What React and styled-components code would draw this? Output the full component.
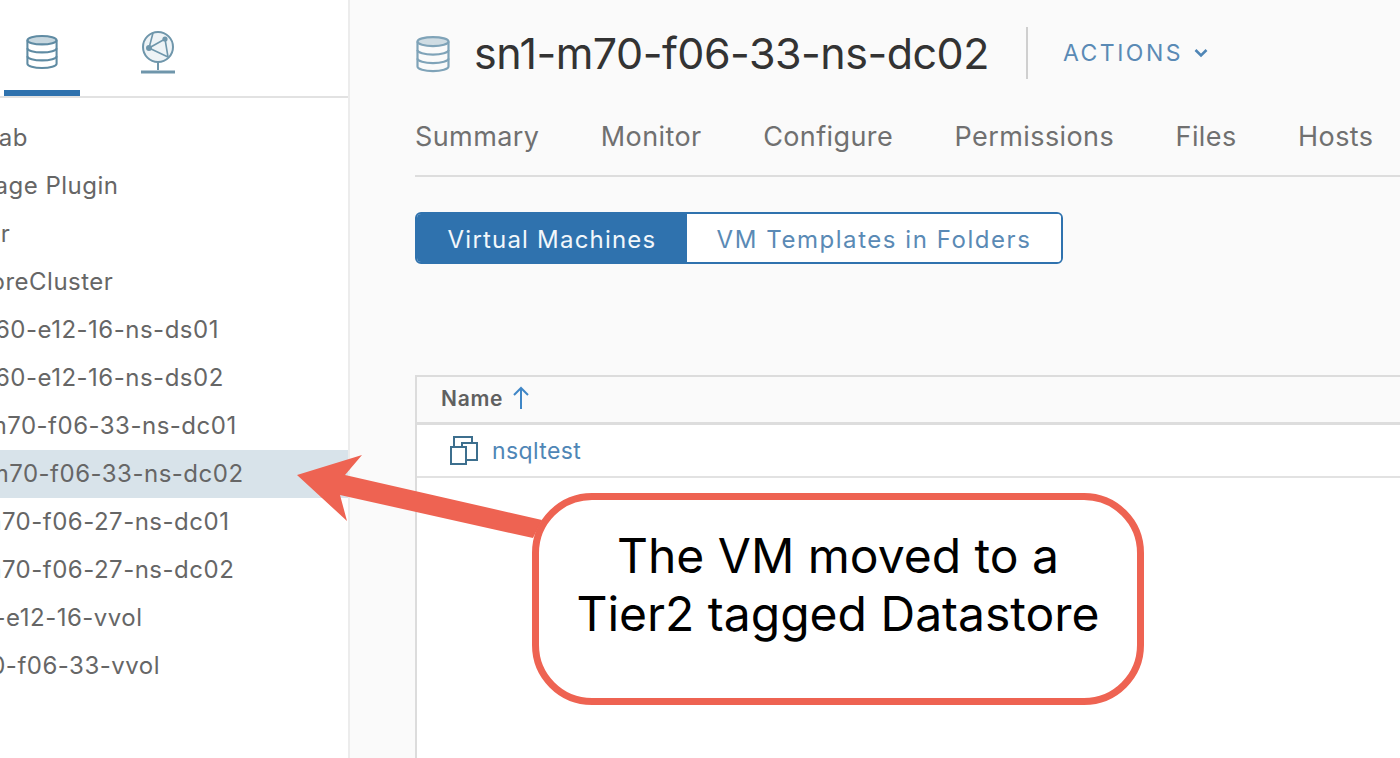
import React from 'react';
import styled, { createGlobalStyle } from 'styled-components';

const GlobalStyle = createGlobalStyle`
  html, body {
    margin: 0;
    height: 100%;
    overflow: hidden;
    background: #fafafa;
    font-family: Inter, "Noto Sans", sans-serif;
  }
`;

const Page = styled.div`
  position: relative;
  display: flex;
  width: 1400px;
  height: 758px;
  overflow: hidden;
`;

const Sidebar = styled.aside`
  flex: none;
  box-sizing: border-box;
  width: 350px;
  background: #ffffff;
  border-right: 2px solid #ececec;
  overflow: hidden;
`;

const IconTabs = styled.div`
  display: flex;
  height: 96px;
  padding-left: 4px;
  gap: 40px;
  border-bottom: 2px solid #e2e2e2;
`;

const IconTab = styled.div`
  box-sizing: border-box;
  width: 76px;
  height: 96px;
  padding-top: ${p => (p.$active ? 34 : 31)}px;
  display: flex;
  justify-content: center;
  border-bottom: 6px solid ${p => (p.$active ? '#2f72ae' : 'transparent')};
`;

const Tree = styled.div`
  padding-top: 16px;
`;

const TreeRow = styled.div`
  height: 48px;
  line-height: 48px;
  font-size: 24px;
  letter-spacing: 0.5px;
  color: #666666;
  white-space: nowrap;
  background: ${p => (p.$selected ? '#d8e3ea' : 'transparent')};
`;

const TreeLabel = styled.span`
  display: inline-block;
  margin-left: ${p => p.$offset}px;
`;

const Main = styled.main`
  flex: 1;
  min-width: 0;
  padding-left: 65px;
  display: flex;
  flex-direction: column;
`;

const TitleBar = styled.div`
  display: flex;
  align-items: center;
  height: 106px;
`;

const TitleIcon = styled.span`
  display: flex;
  margin: 3px 0 0 1px;
`;

const Title = styled.h1`
  margin: 0 0 0 24px;
  font-size: 43px;
  font-weight: 400;
  letter-spacing: -0.5px;
  color: #333333;
  white-space: nowrap;
`;

const Divider = styled.div`
  width: 2px;
  height: 52px;
  margin-left: 37px;
  background: #cfcfcf;
`;

const Actions = styled.div`
  display: flex;
  align-items: center;
  gap: 11px;
  margin-left: 35px;
  font-size: 23px;
  letter-spacing: 2.5px;
  color: #5a8ab5;
`;

const Tabs = styled.nav`
  display: flex;
  gap: 61.5px;
  height: 69px;
  line-height: 62px;
  border-bottom: 2px solid #dddddd;
  font-size: 27px;
  letter-spacing: 0.4px;
  color: #707070;
`;

const Segmented = styled.div`
  display: flex;
  align-self: flex-start;
  box-sizing: border-box;
  height: 52px;
  margin-top: 35px;
  border: 2px solid #2f72ae;
  border-radius: 6px;
  overflow: hidden;
  font-size: 24px;
  line-height: 51px;
`;

const Segment = styled.div`
  box-sizing: border-box;
  width: ${p => p.$width}px;
  text-align: center;
  letter-spacing: ${p => (p.$active ? 1.2 : 1.55)}px;
  background: ${p => (p.$active ? '#2f72ae' : '#ffffff')};
  color: ${p => (p.$active ? '#f2f7fb' : '#5a8ab5')};
`;

const Table = styled.section`
  flex: 1;
  margin-top: 111px;
  background: #ffffff;
  border-left: 2px solid #dcdcdc;
  border-top: 2px solid #dcdcdc;
`;

const HeaderRow = styled.div`
  display: flex;
  align-items: center;
  gap: 9px;
  box-sizing: border-box;
  height: 48px;
  padding: 0 0 3px 24px;
  background: #fafafa;
  border-bottom: 3px solid #dddddd;
  font-size: 21px;
  font-weight: 600;
  letter-spacing: 0.7px;
  color: #606060;
`;

const DataRow = styled.div`
  display: flex;
  align-items: center;
  gap: 14px;
  box-sizing: border-box;
  height: 53px;
  padding-left: 33px;
  border-bottom: 2px solid #e2e2e2;
  font-size: 23px;
  letter-spacing: 0.4px;
  color: #4f86b6;
`;

const Arrow = styled.svg`
  position: absolute;
  left: 0;
  top: 0;
  pointer-events: none;
`;

const Callout = styled.div`
  position: absolute;
  left: 532px;
  top: 493px;
  box-sizing: border-box;
  width: 612px;
  height: 212px;
  padding-bottom: 28px;
  display: flex;
  align-items: center;
  justify-content: center;
  text-align: center;
  background: #ffffff;
  border: 7px solid #ee6352;
  border-radius: 60px;
  font-size: 48px;
  line-height: 58px;
  color: #000000;
`;

const DatastoreIcon = ({ size, color }) => (
  <svg width={size} height={size * 1.12} viewBox="0 0 34 38" fill="none" stroke={color} strokeWidth="2.2">
    <ellipse cx="17" cy="6.5" rx="15.5" ry="4.5" fill={color} fillOpacity="0.35" />
    <path d="M1.5 6.5v25c0 2.5 7 4.5 15.5 4.5s15.5-2 15.5-4.5v-25" />
    <path d="M1.5 15c0 2.5 7 4.5 15.5 4.5s15.5-2 15.5-4.5" />
    <path d="M1.5 23.5c0 2.5 7 4.5 15.5 4.5s15.5-2 15.5-4.5" />
  </svg>
);

const NetworkIcon = () => (
  <svg width="36" height="44" viewBox="0 0 36 44" fill="none" stroke="#6f96ab" strokeWidth="2">
    <circle cx="18" cy="16" r="15" fill="#eef3f6" />
    <path d="M9 17 25 8M9 17l19 9M25 8l3 18M9 17 13 2" strokeWidth="1.6" />
    <circle cx="9" cy="17" r="2" fill="#6f96ab" />
    <circle cx="25" cy="8" r="1.6" fill="#6f96ab" />
    <path d="M18 31v8" />
    <path d="M1 41h34" strokeWidth="3" />
  </svg>
);

const VmIcon = () => (
  <svg width="28" height="29" viewBox="0 0 28 29" fill="none" stroke="#3d6f8e" strokeWidth="2">
    <path d="M4 11V1h18v6" />
    <rect x="12" y="7" width="15" height="17" />
    <rect x="1" y="11" width="15" height="17" fill="#ffffff" />
  </svg>
);

const ChevronIcon = () => (
  <svg width="14" height="10" viewBox="0 0 14 10" fill="none" stroke="#4f86b6" strokeWidth="2.6">
    <path d="M1.5 2 7 7.5 12.5 2" />
  </svg>
);

const SortArrow = () => (
  <svg width="18" height="24" viewBox="0 0 18 24" fill="none" stroke="#3f86c6" strokeWidth="2">
    <path d="M9 23V2M2 9l7-7 7 7" />
  </svg>
);

const treeItems = [
  { label: 'vSAN Lab', offset: -88 },
  { label: 'Storage Plugin', offset: -54 },
  { label: 'Cluster', offset: -74 },
  { label: 'DatastoreCluster', offset: -85 },
  { label: 'sn-e60-e12-16-ns-ds01', offset: -59 },
  { label: 'sn-e60-e12-16-ns-ds02', offset: -59 },
  { label: 'sn1-m70-f06-33-ns-dc01', offset: -63 },
  { label: 'sn1-m70-f06-33-ns-dc02', offset: -61, selected: true },
  { label: 'sn-m70-f06-27-ns-dc01', offset: -59 },
  { label: 'sn-m70-f06-27-ns-dc02', offset: -59 },
  { label: 'e60-e12-16-vvol', offset: -51 },
  { label: 'm70-f06-33-vvol', offset: -45 },
];

const tabs = ['Summary', 'Monitor', 'Configure', 'Permissions', 'Files', 'Hosts'];

export default function App() {
  return (
    <Page>
      <GlobalStyle />
      <Sidebar>
        <IconTabs>
          <IconTab $active>
            <DatastoreIcon size={32} color="#5f8ba3" />
          </IconTab>
          <IconTab>
            <NetworkIcon />
          </IconTab>
        </IconTabs>
        <Tree>
          {treeItems.map(item => (
            <TreeRow key={item.label} $selected={item.selected}>
              <TreeLabel $offset={item.offset}>{item.label}</TreeLabel>
            </TreeRow>
          ))}
        </Tree>
      </Sidebar>
      <Main>
        <TitleBar>
          <TitleIcon>
            <DatastoreIcon size={34} color="#7fa3b8" />
          </TitleIcon>
          <Title>sn1-m70-f06-33-ns-dc02</Title>
          <Divider />
          <Actions>
            ACTIONS
            <ChevronIcon />
          </Actions>
        </TitleBar>
        <Tabs>
          {tabs.map(tab => (
            <span key={tab}>{tab}</span>
          ))}
        </Tabs>
        <Segmented>
          <Segment $active $width={270}>Virtual Machines</Segment>
          <Segment $width={374}>VM Templates in Folders</Segment>
        </Segmented>
        <Table>
          <HeaderRow>
            Name
            <SortArrow />
          </HeaderRow>
          <DataRow>
            <VmIcon />
            nsqltest
          </DataRow>
        </Table>
      </Main>
      <Arrow width="1400" height="758" viewBox="0 0 1400 758">
        <path d="M297 475 362 455 345 475 542 520 533 538 340 495 347 521Z" fill="#ee6352" />
      </Arrow>
      <Callout>
        The VM moved to a
        <br />
        Tier2 tagged Datastore
      </Callout>
    </Page>
  );
}
